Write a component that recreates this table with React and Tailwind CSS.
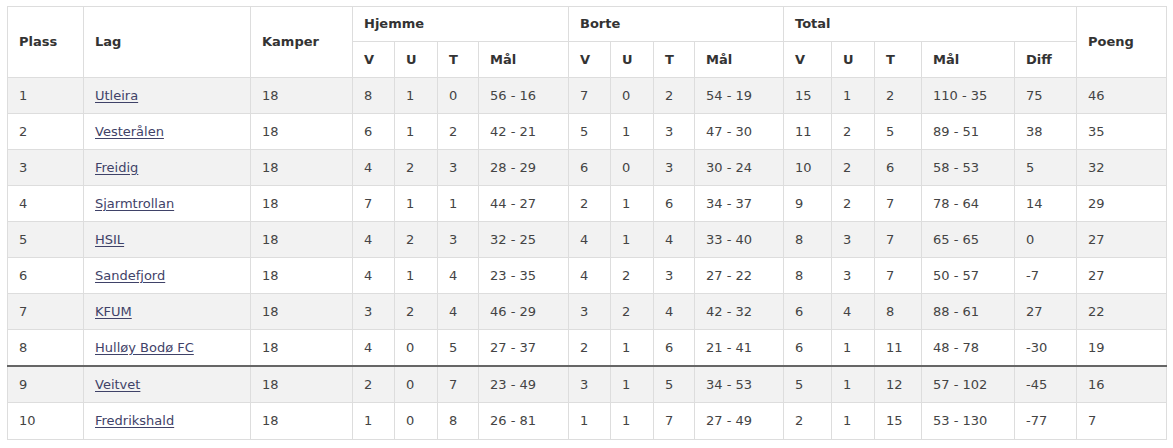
const rows = [
  { plass: 1, lag: "Utleira", kamper: 18, h: [8, 1, 0, "56 - 16"], b: [7, 0, 2, "54 - 19"], t: [15, 1, 2, "110 - 35", 75], poeng: 46 },
  { plass: 2, lag: "Vesterålen", kamper: 18, h: [6, 1, 2, "42 - 21"], b: [5, 1, 3, "47 - 30"], t: [11, 2, 5, "89 - 51", 38], poeng: 35 },
  { plass: 3, lag: "Freidig", kamper: 18, h: [4, 2, 3, "28 - 29"], b: [6, 0, 3, "30 - 24"], t: [10, 2, 6, "58 - 53", 5], poeng: 32 },
  { plass: 4, lag: "Sjarmtrollan", kamper: 18, h: [7, 1, 1, "44 - 27"], b: [2, 1, 6, "34 - 37"], t: [9, 2, 7, "78 - 64", 14], poeng: 29 },
  { plass: 5, lag: "HSIL", kamper: 18, h: [4, 2, 3, "32 - 25"], b: [4, 1, 4, "33 - 40"], t: [8, 3, 7, "65 - 65", 0], poeng: 27 },
  { plass: 6, lag: "Sandefjord", kamper: 18, h: [4, 1, 4, "23 - 35"], b: [4, 2, 3, "27 - 22"], t: [8, 3, 7, "50 - 57", -7], poeng: 27 },
  { plass: 7, lag: "KFUM", kamper: 18, h: [3, 2, 4, "46 - 29"], b: [3, 2, 4, "42 - 32"], t: [6, 4, 8, "88 - 61", 27], poeng: 22 },
  { plass: 8, lag: "Hulløy Bodø FC", kamper: 18, h: [4, 0, 5, "27 - 37"], b: [2, 1, 6, "21 - 41"], t: [6, 1, 11, "48 - 78", -30], poeng: 19 },
  { plass: 9, lag: "Veitvet", kamper: 18, h: [2, 0, 7, "23 - 49"], b: [3, 1, 5, "34 - 53"], t: [5, 1, 12, "57 - 102", -45], poeng: 16 },
  { plass: 10, lag: "Fredrikshald", kamper: 18, h: [1, 0, 8, "26 - 81"], b: [1, 1, 7, "27 - 49"], t: [2, 1, 15, "53 - 130", -77], poeng: 7 },
]

const widths = [76, 167, 102, 42, 43, 41, 90, 42, 43, 41, 89, 48, 43, 47, 93, 62, 90]

export default function App() {
  const th = "border border-[#dddddd] px-[11px] text-left align-middle font-bold"

  return (
    <div className="pl-[7px] pt-[6px] bg-white min-h-[448px]" style={{ fontFamily: "'DejaVu Sans', 'Liberation Sans', sans-serif" }}>
      <table className="table-fixed border-collapse w-[1159px] text-[13px] text-[#444444]">
        <colgroup>
          {widths.map((w, i) => (
            <col key={i} width={w} />
          ))}
        </colgroup>
        <thead className="text-[#333333]">
          <tr className="h-[35px]">
            <th rowSpan={2} className={th}>Plass</th>
            <th rowSpan={2} className={th}>Lag</th>
            <th rowSpan={2} className={th}>Kamper</th>
            <th colSpan={4} className={th}>Hjemme</th>
            <th colSpan={4} className={th}>Borte</th>
            <th colSpan={5} className={th}>Total</th>
            <th rowSpan={2} className={th}>Poeng</th>
          </tr>
          <tr className="h-[36px]">
            {["V", "U", "T", "Mål", "V", "U", "T", "Mål", "V", "U", "T", "Mål", "Diff"].map((h, i) => (
              <th key={i} className={th}>{h}</th>
            ))}
          </tr>
        </thead>
        <tbody>
          {rows.map((r, i) => {
            // rows below the line are a touch taller
            const td = `border border-[#dddddd] px-[11px] align-middle ${r.plass > 8 ? "h-[37px]" : "h-[36px]"}`
            return (
              <tr key={r.plass} className={`${i % 2 === 0 ? "bg-[#f2f2f2]" : "bg-white"} ${r.plass === 8 ? "border-b-2 border-b-[#666666]" : ""}`}>
                <td className={td}>{r.plass}</td>
                <td className={td}>
                  <a href="#" className="text-[#3f4268] underline underline-offset-2">{r.lag}</a>
                </td>
                <td className={td}>{r.kamper}</td>
                {r.h.map((v, j) => <td key={"h" + j} className={td}>{v}</td>)}
                {r.b.map((v, j) => <td key={"b" + j} className={td}>{v}</td>)}
                {r.t.map((v, j) => <td key={"t" + j} className={td}>{v}</td>)}
                <td className={td}>{r.poeng}</td>
              </tr>
            )
          })}
        </tbody>
      </table>
    </div>
  )
}
